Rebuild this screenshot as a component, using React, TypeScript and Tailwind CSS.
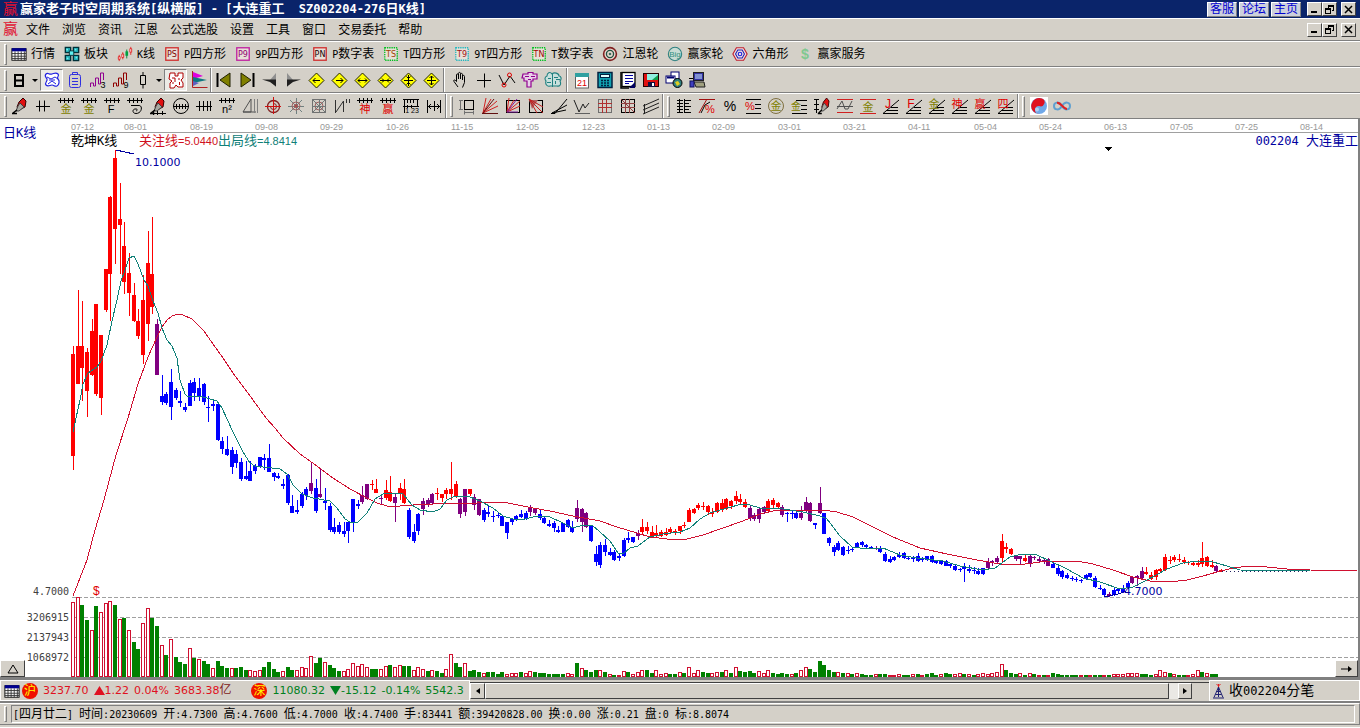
import type { ReactNode } from 'react'

const CJK = "font-['DejaVu_Sans_Mono','Noto_Sans_CJK_SC',sans-serif]"

const RAISED = 'bg-[#d4d0c8] border border-t-white border-l-white border-r-[#404040] border-b-[#404040]'

// split a label into latin and han runs, latin is drawn at the half-width size
function runs(text: string) {
  return text.match(/[\x00-\x7f]+|[^\x00-\x7f]+/g) ?? []
}

function Mixed({ text, latin = 'text-[10px]' }: { text: string; latin?: string }) {
  return (
    <span className="whitespace-pre">
      {runs(text).map((r, i) => (
        <span key={i} className={r.charCodeAt(0) < 128 ? latin : ''}>
          {r}
        </span>
      ))}
    </span>
  )
}

function Glyph({ c, x = 9, y = 16, size = 12, fill = '#e00000' }: { c: string; x?: number; y?: number; size?: number; fill?: string }) {
  return (
    <text x={x} y={y} fontSize={size} fill={fill} textAnchor="middle" className="font-['Liberation_Sans','Noto_Sans_CJK_SC',sans-serif]">
      {c}
    </text>
  )
}

function L({ d, c = '#000', w = 1, f = 'none' }: { d: string; c?: string; w?: number; f?: string }) {
  return <path d={d} stroke={c} strokeWidth={w} fill={f} />
}

function Icon({ children, size = 18 }: { children: ReactNode; size?: number }) {
  return (
    <svg width={size} height={size} viewBox="0 0 18 18" className="shrink-0" aria-hidden="true">
      {children}
    </svg>
  )
}

const RULER = 'M1 3.5h16M3.5 1v5M7.5 1v5M11.5 1v5M15.5 1v5'
const FAN = 'M1 16.5h15M1 16.5L17 3M5 13.5h11M9 10.5h7'

function Diamond({ d }: { d: string }) {
  return (
    <>
      <path d="M9.5 2L17 9.5L9.5 17L2 9.5z" fill="#ffff00" stroke="#202000" strokeWidth="1" />
      <L d={d} />
    </>
  )
}

function Frame({ t, c, tc }: { t: string; c: string; tc: string }) {
  return (
    <>
      <rect x="2" y="2" width="14" height="14" fill="#e8e0d8" stroke={c} strokeWidth="1.5" strokeDasharray={t[0] === 'T' ? '1.5 1' : undefined} />
      <text x="9" y="12.5" fontSize="9" fill={tc} textAnchor="middle" className="font-['DejaVu_Sans',sans-serif]">
        {t}
      </text>
    </>
  )
}

function TableIcon() {
  return (
    <>
      <rect x="1" y="3" width="16" height="13" fill="#fff" stroke="#000" />
      <rect x="1" y="2.5" width="16" height="3.5" fill="#000090" />
      <L d="M1 8.5h16M1 11.5h16M1 14h16M4.5 6v10M8 6v10M11.5 6v10M15 6v10" c="#303030" />
    </>
  )
}

const pen = (
  <>
    <path d="M8 5L12 1L15 4L14 10L8 13L6 10z" fill="#e01010" stroke="#300" strokeWidth="1" />
    <path d="M7 9L9 6L13 10L8 14L5 14z" fill="#a8a8a0" stroke="#404040" strokeWidth="1" />
    <L d="M2 16L6 13M1 16.5h5" w={1.5} />
  </>
)

const modules: [string, ReactNode][] = [
  ['行情', <TableIcon />],
  ['板块', <>
    <path d="M1.500 1.500h6v6h-6zM10.500 1.500h6v6h-6zM1.500 10.500h6v6h-6zM10.500 10.500h6v6h-6z" fill="#20a8b0" stroke="#003038" strokeWidth="1.500" />
    <path d="M6 5.500h5v5H6z" fill="#60f0f0" stroke="#003038" />
    <path d="M2.500 3h2v2h-2zM12 3h2v2h-2zM3 13h2v2H3zM13 12h2v2h-2z" fill="#70f0f0" />
  </>],
  ['K线', <>
    <L d="M2.500 10v7M6.500 7v8M15.500 1v9" c="#e02020" />
    <path d="M1.500 12h2v3h-2zM5.500 9h2v4h-2zM14.500 3h2v4h-2z" fill="#fff" stroke="#e02020" />
    <L d="M11 4v10" c="#008030" />
    <rect x="9.500" y="6" width="3" height="5" fill="#00a040" />
  </>],
  ['P四方形', <Frame t="PS" c="#d03030" tc="#800000" />],
  ['9P四方形', <Frame t="P9" c="#c020a0" tc="#900070" />],
  ['P数字表', <Frame t="PN" c="#d03030" tc="#200000" />],
  ['T四方形', <Frame t="TS" c="#00c020" tc="#a04000" />],
  ['9T四方形', <Frame t="T9" c="#20b8c0" tc="#a01010" />],
  ['T数字表', <Frame t="TN" c="#00c020" tc="#a00000" />],
  ['江恩轮', <>
    <circle cx="9" cy="9" r="7.200" fill="#e8d8d0" stroke="#802020" strokeWidth="1.800" />
    <circle cx="9" cy="9" r="4" fill="none" stroke="#205040" strokeWidth="1.500" />
    <circle cx="9" cy="9" r="1.500" fill="#407060" />
  </>],
  ['赢家轮', <>
    <circle cx="9" cy="9" r="7.500" fill="#c8dcd4" stroke="#308080" strokeWidth="1.200" />
    <Glyph c="Big" y={12} size={9} fill="#309080" />
  </>],
  ['六角形', <>
    <path d="M5 2h8l4 7l-4 7H5L1 9z" fill="#f0e0e0" stroke="#c02030" strokeWidth="1.300" />
    <path d="M6.500 4.500h5l2.500 4.500l-2.500 4.500h-5L4 9z" fill="none" stroke="#2020b0" strokeWidth="1.200" />
    <circle cx="9" cy="9" r="2" fill="none" stroke="#2020e0" strokeWidth="1.300" />
  </>],
  ['赢家服务', <text x="9" y="15" fontSize="16" fontWeight="700" fill="#80c890" textAnchor="middle" className="font-['Liberation_Sans',sans-serif]">$</text>],
]

type Tool = { name: string; icon: ReactNode; on?: boolean; menu?: boolean }

const viewTools: Tool[] = [
  { name: '周期', icon: <L d="M5 4h8v11H5zM5 9.500h8" w={2} />, menu: true },
  { name: '云图', on: true, icon: <>
    <path d="M3 3c2-2 3 1 6 0s4-2 6 0s-2 3 0 5s1 6-1 7s-3-1-5-1s-4 2-6 0s2-4 1-6s-3-3-1-5z" fill="#fff" stroke="#2020e0" strokeWidth="1.200" />
    <L d="M4 6l4 2l4-2l3 2M5 13l4-3l4 3M6 9h6" c="#2020e0" />
  </> },
  { name: '便签', icon: <>
    <rect x="3.500" y="3.500" width="11" height="13" rx="2" fill="none" stroke="#3030e0" />
    <L d="M6.500 4v-2.500h5v2.500M6 7.500h6M6 10.500h6M6 13.500h6" c="#3030e0" />
  </> },
  { name: '波段3', icon: <>
    <L d="M1.500 16v-4h3v3h2v-8h3v6h2v-11h3v7" c="#900090" />
    <Glyph c="3" x={14} y={17} size={9} fill="#000" />
  </> },
  { name: '波段9', icon: <>
    <L d="M1.500 16v-4h3v3h2v-8h3v6h2v-11h3v7" c="#900000" />
    <Glyph c="9" x={14} y={17} size={9} fill="#000" />
  </> },
  { name: 'K线样式', icon: <L d="M6.500 4.500h5v9h-5zM9 1v3.500M9 13.500v4" />, menu: true },
  { name: '形态', on: true, icon: <>
    <path d="M3 2h5v3h3V2h5v5l-2 2l2 3v4h-5l-2-2l-2 3H3v-5l2-2l-3-2z" fill="#fff" stroke="#b00000" />
    <L d="M5 7h3v4M11 8h2M12.500 11v3M5 12h2" c="#b00000" />
  </> },
  { name: '分布', icon: <>
    <path d="M3 1L13 5L3 8z" fill="#e000e0" />
    <path d="M3 6L17 9L3 12z" fill="#107880" />
    <path d="M3 10L9 12L3 15z" fill="#6060c0" />
    <L d="M2.500 0v16.500h15" c="#b02020" />
  </> },
]

const moveTools: Tool[] = [
  { name: '最前', icon: <><path d="M15 2v14L5 9z" fill="#808000" stroke="#202000" /><L d="M2.500 2v14" w={2} /></> },
  { name: '最后', icon: <><path d="M3 2v14L13 9z" fill="#808000" stroke="#202000" /><L d="M15.500 2v14" w={2} /></> },
  { name: '左移', icon: <><path d="M15 2v14L9 9z" fill="#909090" /><path d="M1 8.500h14v7L9 11z" fill="#202020" /></> },
  { name: '右移', icon: <><path d="M3 2v14L9 9z" fill="#909090" /><path d="M17 8.500H3v7L9 11z" fill="#202020" /></> },
  { name: '向左', icon: <Diamond d="M6 9.500h7M8.500 7L6 9.500L8.500 12" /> },
  { name: '向右', icon: <Diamond d="M6 9.500h7M10.500 7L13 9.500L10.500 12" /> },
  { name: '横向放大', icon: <Diamond d="M5 9.500h9M7 7.500L5 9.500l2 2M12 7.500l2 2l-2 2" /> },
  { name: '横向缩小', icon: <Diamond d="M4 9.500h11M6 7.500l2 2l-2 2M13 7.500l-2 2l2 2" /> },
  { name: '纵向缩小', icon: <Diamond d="M9.500 4v11M5 9.500h9M7.500 5.500l2 2l2-2M7.500 13.500l2-2l2 2" /> },
  { name: '纵向放大', icon: <Diamond d="M9.500 5v9M5 9.500h9M7.500 7l2-2l2 2M7.500 12l2 2l2-2" /> },
]

const pickTools: Tool[] = [
  { name: '拖动', icon: <L d="M6 16L2 10.500c-1-2 1-2 2.500 0V4c0-1.500 2-1.500 2 0v4V2.500c0-1.500 2-1.500 2 0V8V3.500c0-1.500 2-1.500 2 0V9V5.500c0-1.500 2-1.500 2 0v6l-2 5" /> },
  { name: '十字', icon: <L d="M2 9.500h14M9.500 2.500v14" /> },
  { name: '连线', icon: <><L d="M1 4l5 10l6-9l5 7" /><circle cx="6" cy="14" r="2" fill="none" stroke="#e00000" /><circle cx="11.500" cy="4" r="2" fill="none" stroke="#e00000" /></> },
  { name: '江恩树', icon: <><path d="M2 3h5V1.500h5V3h4v5h-4v2h-2v6H6v-6H3V7H1z" fill="#e8d0e8" stroke="#900090" strokeWidth="1.200" /><L d="M4 5.500h4M10 5.500h4M7 8.500h3" c="#900090" /></> },
  { name: '脑图', icon: <><path d="M8 3c-2-3-5-1-5 2c-3 1-2 4-1 5c-1 3 1 6 4 5h7c4 1 4-3 3-5c2-2 1-5-1-5c0-3-5-4-7-2z" fill="#c8e0dc" stroke="#208080" strokeWidth="1.100" /><L d="M8.500 3v13M4 7.500h3M10 6.500h4M3 11.500h4M11.500 10v3M12 8.500h4" c="#208080" /></> },
]

const sysTools: Tool[] = [
  { name: '日历', icon: <><rect x="2.500" y="4" width="13" height="13" fill="#fff" stroke="#606060" /><rect x="2" y="2" width="14" height="4" fill="#30a0a0" /><Glyph c="21" y={15} size={9} /></> },
  { name: '计算器', icon: <><rect x="2" y="1.500" width="14" height="15" fill="#10a0b0" stroke="#002040" strokeWidth="1.500" /><rect x="4.500" y="3.500" width="9" height="3" fill="#e0ffff" stroke="#002040" /><path d="M5 9.500h8M5 12h8M5 14.500h8" stroke="#002040" strokeWidth="1.500" strokeDasharray="2 1" /></> },
  { name: '记事', icon: <><rect x="3" y="1.500" width="13" height="14" fill="#fff" stroke="#000" strokeWidth="1.300" /><L d="M6 4.500h8M6 7.500h8M6 10.500h8M6 12.500h4" c="#0000a0" /><L d="M2 1v16h8" w={1.500} /><path d="M10 17l6-6v6z" fill="#000060" /></> },
  { name: '保存', icon: <><rect x="1.500" y="2.500" width="15" height="13" fill="#e01010" stroke="#200" /><path d="M5 3h11v6H5z" fill="#90f0e0" /><path d="M10 9l6-5v5z" fill="#10a050" /><rect x="6" y="11" width="7" height="5" fill="#101040" /><rect x="10" y="12" width="2" height="3" fill="#fff" /></> },
  { name: '网络', icon: <><rect x="6" y="1" width="8" height="7" fill="#fff" stroke="#000070" /><rect x="1" y="5" width="9" height="7" fill="#fff" stroke="#000070" /><L d="M2 6.500h7" c="#000070" w={2} /><circle cx="12.500" cy="12" r="4.500" fill="#308080" stroke="#000" /><path d="M10 11l3-1l2 3l-3 2z" fill="#e0d020" /></> },
  { name: '终端', icon: <><rect x="5.500" y="1.500" width="10" height="8" fill="#3030a0" stroke="#202020" /><rect x="7" y="3" width="7" height="5" fill="#8090d0" /><path d="M6 11h10l1 5H8z" fill="#a0a080" stroke="#202020" /><rect x="2" y="10" width="4" height="6" fill="#4040c0" stroke="#101060" /><L d="M1 7.500h4" /></> },
]

const drawTools: Tool[] = [
  { name: '画笔', icon: pen },
  { name: '等分线', icon: <L d="M2 9.500h14M5.500 3.500v11M10.500 3.500v11" /> },
  { name: '黄金时段', icon: <><L d={RULER} /><Glyph c="金" size={11} fill="#808000" /></> },
  { name: '黄金周期', icon: <><L d={RULER} /><Glyph c="金" size={11} fill="#808000" /></> },
  { name: '斐波那契', icon: <><L d={RULER} /><Glyph c="F" x={8} size={11} fill="#000" /></> },
  { name: '螺旋', icon: <><L d={RULER} /><L d="M5 8.500h8c4 0 3 8-3 8c-4 0-4-5 0-4.500c2 0 1 2 0 2" /></> },
  { name: '笔尺', icon: <>{pen}<L d="M2 16.500h15M4.500 14v4M8.500 14v4M13.500 14v4" /></> },
  { name: '圆尺', icon: <><circle cx="9" cy="9" r="7.500" fill="none" stroke="#000" /><L d="M1 9.500h16M4.500 7v5M7.500 7v5M10.500 7v5M13.500 7v5" /></> },
  { name: '密等分', icon: <L d="M1 9.500h16M4.500 4v10M8.500 4v10M12.500 4v10M15.500 4v10" /> },
  { name: '平方', icon: <><L d={RULER} /><Glyph c="n²" size={11} fill="#000" /></> },
  { name: '角度', icon: <><L d="M2 15L10 2v13zM2 15h13" c="#505050" /><L d="M13.500 2v14M16.500 2v14" c="#808080" /></> },
  { name: '时间圆', icon: <><circle cx="9.500" cy="9.500" r="6" fill="none" stroke="#802020" strokeWidth="1.300" /><path d="M9.500 6.500a3 3 0 1 1-3 3" fill="none" stroke="#802020" /><L d="M9.500 0v17M1 9.500h16" c="#d01010" /></> },
  { name: '星形', icon: <><L d="M9.500 1v16M1 9.500h16M3 3l12 12M15 3L3 15" c="#708080" /><circle cx="9" cy="9" r="4" fill="none" stroke="#a06060" /><circle cx="9" cy="9" r="2" fill="#a05050" /></> },
  { name: '蛛网', icon: <><rect x="2.500" y="2.500" width="13" height="13" fill="none" stroke="#707070" /><circle cx="9" cy="9" r="4" fill="none" stroke="#a06060" /><L d="M2 2l14 14M16 2L2 16M9.500 2v14M2 9.500h14" c="#707878" /></> },
  { name: '锯齿', icon: <L d="M2.500 16V3M3 15L10.500 4v11M13.500 2v4M16.500 2v4" c="#303030" /> },
  { name: '神尺', icon: <><L d={RULER} /><Glyph c="神" size={11} /></> },
  { name: '赢尺', icon: <><L d={RULER} /><Glyph c="赢" size={11} /></> },
  { name: '数列', icon: <><L d="M1 2.500h16M1 9.500h16M2.500 2v14M5.500 2v4M8.500 2v4M11.500 2v4M15.500 2v8M5.500 8v3M9.500 8v3" /><Glyph c="1 23" x={10} size={7} fill="#000" /></> },
  { name: '跨度', icon: <L d="M2.500 3v13M15.500 3v13M9.500 4v10M3 9.500h12M6 7L3.500 9.500L6 12M12 7l2.500 2.500L12 12" /> },
]

const shapeTools: Tool[] = [
  { name: '矩形', icon: <><rect x="6.500" y="3.500" width="9" height="9" fill="none" stroke="#000" /><L d="M2.500 3v10M1 3.500h4M1 12.500h4M6 15.500h10M6.500 13.500v4M15.500 13.500v4" c="#707070" /></> },
  { name: '射线', icon: <><L d="M2 16L5 1M2 16L10 2M2 16L16 4M2 16L17 9" c="#d02020" /><L d="M2 16L13 2M1 16.500h16" c="#601010" /></> },
  { name: '方射', icon: <><rect x="2.500" y="3.500" width="13" height="12" fill="none" stroke="#000" /><L d="M3 15L5 1M3 15L10 3M3 15L16 4M3 15L16 9" c="#d02020" /><L d="M3 15L13 2M3 15h11" c="#8020a0" /></> },
  { name: '阻力线', icon: <><rect x="2.500" y="3.500" width="13" height="12" fill="none" stroke="#000" /><path d="M2 3h9L5 12z" fill="#b06060" /><L d="M2 2L16 16M2 2l8 14M2 2l14 8" c="#c02020" /></> },
  { name: '角射', icon: <L d="M1 16.500h4L17 2M2 16L17 8M2 16L16 13" /> },
  { name: '波形', icon: <><L d="M1 3l5 12l4-8l2 4L16 6" c="#202020" /><L d="M2 16.500h15" c="#606060" /></> },
  { name: '方格', icon: <><rect x="2.500" y="2.500" width="13" height="13" fill="none" stroke="#707070" /><L d="M2 6.500h14M2 10.500h14M6.500 2v14M10.500 2v14" c="#b03030" /></> },
  { name: '九宫', icon: <><rect x="2.500" y="2.500" width="13" height="13" fill="none" stroke="#000" /><L d="M2 6.500h14M2 10.500h14M6.500 2v14M10.500 2v14M2 2l14 14" c="#904040" /></> },
  { name: '平行线', icon: <L d="M1 9L17 2M1 13L17 6M1 17L17 10M2.500 7v10" c="#202020" /> },
]

const levelTools: Tool[] = [
  { name: '刻度', icon: <path d="M4.500 2v14M9.500 2v14M2 3.500h6M2 6.500h6M2 9.500h6M2 12.500h6M2 15.500h6M9 3.500h7M9 6.500h5M9 9.500h7M9 12.500h5M9 15.500h7" fill="none" stroke="#000" /> },
  { name: '百分射', icon: <><L d="M1 2.500h16M1 16L9 2" c="#a01010" /><L d="M3 16l4-8l5-3" /><Glyph c="%" x={12} size={11} /></> },
  { name: '百分', icon: <Glyph c="%" y={14} size={14} fill="#000" /> },
  { name: '百分线', icon: <><L d="M2 2.500h15M11 7.500h6M11 11.500h6M2 16.500h15" /><Glyph c="%" x={6} y={13} size={11} /></> },
  { name: '金圆', icon: <><circle cx="9" cy="9" r="7.500" fill="none" stroke="#807040" /><Glyph c="金" y={13} size={11} fill="#808000" /></> },
  { name: '金线', icon: <><L d="M6 3.500h11M11 8.500h6M11 12.500h6M2 16.500h15" /><Glyph c="金" x={6} y={13} size={10} fill="#808000" /></> },
  { name: '笔线', icon: <><g transform="translate(4 0) scale(0.800 1)">{pen}</g><L d="M3.500 2v14M1 2.500h5M1 7.500h5M1 12.500h5" /></> },
  { name: '甘氏', icon: <><L d="M1 2.500h16M1 15.500h16" c="#d02020" /><L d="M1 12L6 4l3 8l3 0l4-8M1 9.500h16" c="#505050" /></> },
  { name: '金平', icon: <><L d="M1 2.500h16M1 16.500h16" c="#d02020" /><Glyph c="金" y={14} size={11} fill="#808000" /></> },
  ...['J', 'F', '金', '神', '赢', '四'].map((c) => ({
    name: `${c}角线`,
    icon: <><L d={FAN} /><Glyph c={c} x={6} y={11} size={c > 'z' ? 11 : 12} fill={c === '金' ? '#808000' : '#e00000'} /></>,
  })),
]

const extraTools: Tool[] = [
  { name: '太极', icon: <><rect width="18" height="18" fill="#fff" /><circle cx="9" cy="9" r="8" fill="#70a8e8" /><path d="M12 1.500a8 8 0 1 0-3 15.500a4 4 0 0 1 0-8a4 4 0 0 0 3-7.500z" fill="#e01020" /><circle cx="11" cy="5.500" r="1.800" fill="#e01020" /><circle cx="7" cy="12.500" r="2" fill="#b0d0f0" /></> },
  { name: '循环', icon: <><path d="M9 9C6 4 1 5 1 9s5 5 8 0" fill="none" stroke="#60a0d0" strokeWidth="2" /><path d="M9 9c3 5 8 4 8 0s-5-5-8 0" fill="none" stroke="#60a0d0" strokeWidth="2" /><path d="M4 6c4-1 6 6 10 6" fill="none" stroke="#e02020" strokeWidth="2.200" /></> },
]

function Tools({ items }: { items: Tool[] }) {
  return (
    <div className="flex items-center">
      {items.map((t) => (
        <button
          key={t.name}
          type="button"
          title={t.name}
          aria-pressed={t.on}
          className={
            'flex h-[22px] items-center justify-center ' +
            (t.menu ? 'w-8 gap-1 ' : 'w-[23px] ') +
            (t.on ? 'border border-t-[#808080] border-l-[#808080] border-r-white border-b-white bg-[#ecebe6]' : '')
          }
        >
          <Icon>{t.icon}</Icon>
          {t.menu && <span className="border-x-[3px] border-t-[3px] border-x-transparent border-t-black" />}
        </button>
      ))}
    </div>
  )
}

function Grip({ className = 'mx-1 h-[21px]' }: { className?: string }) {
  return (
    <div
      className={
        'w-[3px] shrink-0 self-center border border-t-white border-l-white border-r-[#808080] border-b-[#808080] ' + className
      }
    />
  )
}

function Sep({ className = '' }: { className?: string }) {
  return <div className={'w-[2px] shrink-0 self-stretch border-l border-l-[#808080] border-r border-r-white ' + className} />
}

function BandSplit() {
  return (
    <>
      <Sep />
      <Grip className="mr-[2px] ml-[3px] h-[21px]" />
    </>
  )
}

function WindowButtons() {
  const b = 'flex h-[14px] w-[15px] items-center justify-center ' + RAISED
  return (
    <div className="flex">
      <button type="button" aria-label="最小化" className={b}>
        <svg width="9" height="9"><path d="M1 7h6" stroke="#000" strokeWidth="2" /></svg>
      </button>
      <button type="button" aria-label="还原" className={b}>
        <svg width="9" height="9" fill="none" stroke="#000" shapeRendering="crispEdges">
          <path d="M3.500 2.500v-2h5v5h-2M3 1.500h5M.5 3.500h5v5h-5zM1 4.500h5" />
        </svg>
      </button>
      <button type="button" aria-label="关闭" className={'ml-1 ' + b}>
        <svg width="9" height="9"><path d="M1 1l7 7M8 1l-7 7" stroke="#000" strokeWidth="1.500" /></svg>
      </button>
    </div>
  )
}

// colour, high, body top, body bottom, low - one entry per trading day
const CANDLES = `r346,354,456,470 r290,346,384,384 r301,346,368,401 r348,352,391,417 r319,331,375,376 r304,304,394,396 r335,335,398,415
r269,269,310,312 r196,197,274,321 r150,158,229,264 r183,219,225,274 r222,246,282,294 r253,273,293,316 r283,295,321,322 r309,321,336,339
r275,300,355,364 r231,263,324,341 r217,274,307,314 p319,324,375,375 b375,396,402,405 b392,394,403,405 b369,382,407,420 b388,390,398,400
b391,401,403,407 b403,407,410,412 b380,383,406,406 b378,382,393,401 b378,388,397,401 b383,384,402,405 b396,407,408,422 b399,404,406,411
b404,404,440,441 b437,441,449,454 b436,449,455,456 b447,450,467,474 b450,454,463,468 b458,462,479,481 b461,476,479,480 b461,471,481,481
b464,466,471,474 b457,457,467,468 b454,458,460,470 b444,458,472,472 b472,473,477,481 b473,476,478,479 b479,484,486,489 b474,475,503,505
b495,506,513,513 b500,510,512,514 b492,494,506,508 b487,489,495,500 p463,483,491,494 b479,488,511,513 p468,494,497,498 b488,501,503,510
b503,506,530,532 b518,527,532,534 b522,525,532,534 b522,531,534,537 b521,522,531,543 b499,499,522,532 b500,504,506,509 p486,495,502,504
p484,484,499,500 r480,484,485,490 r479,489,493,493 p496,498,499,505 r480,490,498,500 r476,492,501,502 p493,497,503,522 r483,488,494,500
r479,489,503,504 b508,510,537,539 b524,532,541,543 b513,514,531,535 p498,501,509,515 p498,500,505,507 p493,494,503,504 r488,493,494,500
r494,494,498,502 r488,490,494,499 r462,489,494,500 r481,484,497,498 p498,499,514,518 p489,489,512,516 r489,489,494,496 p494,497,505,510
p499,499,515,516 b508,510,520,522 b506,512,514,517 b511,516,517,522 b513,515,516,518 b515,516,526,526 b522,522,533,539 b518,519,522,525
b515,516,519,521 b510,514,517,518 b511,513,519,520 p505,508,512,516 p508,508,513,515 b510,514,518,520 b517,518,523,524 b520,524,526,527
b521,523,528,532 b526,530,532,533 b523,523,532,532 b519,520,527,528 b521,527,532,533 p500,508,519,522 p508,509,522,532 p512,513,527,528
b525,526,541,542 b546,554,562,566 b542,545,565,568 b539,545,552,556 b548,552,555,556 b550,552,560,561 b554,556,558,561 b538,540,556,557
b532,538,540,543 b537,537,542,543 p530,533,536,540 r519,527,532,535 r522,527,531,534 r526,532,536,537 r525,533,536,537 r530,532,536,537
r528,532,535,536 r527,529,532,534 r529,531,532,535 r526,526,531,534 r522,525,526,528 r508,510,522,522 r508,509,513,514 r503,505,508,510
r502,506,507,510 r505,506,512,515 r508,512,514,517 r502,503,512,513 r499,503,509,512 r498,499,509,510 r500,501,506,509 r491,496,501,504
r494,499,502,504 r499,502,507,508 p505,508,518,521 p513,515,519,521 p507,509,519,523 p506,507,512,514 r499,501,511,512 r498,500,505,508
r502,503,507,508 p505,507,515,517 b512,513,514,522 b511,513,514,519 b510,513,518,519 p506,513,518,520 p497,502,510,512 p502,503,521,522
b523,523,525,529 p487,503,513,514 b513,513,534,534 b537,538,543,546 b545,547,552,556 b541,543,550,551 b546,547,555,556 b546,550,551,554
b547,549,550,552 b542,543,547,548 b541,542,545,547 b544,545,547,548 b546,547,548,549 p546,548,549,550 b546,548,552,553 b552,554,561,562
b556,559,562,563 b556,557,560,561 b552,555,557,558 b552,553,558,559 b557,558,559,560 b556,558,559,562 b553,556,561,562 b557,558,560,562
b556,556,560,561 b555,556,562,563 b560,561,563,564 b560,561,564,565 b560,561,566,566 b564,564,566,568 b565,566,570,571 b568,569,570,572
b563,567,569,582 b565,569,571,573 b567,570,571,574 b568,571,574,575 b568,568,574,575 p558,562,568,569 p560,561,563,566 p556,558,562,564
r534,541,558,563 r543,547,549,553 r548,549,554,555 p555,555,559,561 p556,556,559,565 r554,558,561,562 p555,556,563,567 p556,557,558,560
p557,559,561,563 p558,560,562,564 p558,559,566,566 b563,564,568,568 b566,568,574,576 b570,571,577,579 b573,575,578,579 b576,578,579,581
b577,579,580,582 b579,580,581,583 b574,575,579,580 b573,573,577,578 b576,578,587,588 b585,588,589,590 b588,589,595,597 p592,594,596,597
b588,590,595,596 b588,589,591,593 b585,588,592,593 b581,583,587,589 p576,577,583,584 p575,576,578,586 p567,571,578,579 r567,572,574,575
r572,575,579,580 r569,570,577,580 r568,569,571,573 r554,557,570,571 r556,560,561,564 r555,557,560,562 r554,559,560,562 r557,560,562,564
r561,562,563,565 r562,563,565,566 r560,563,565,567 r542,558,564,567 r556,557,566,567 r560,565,567,568 p565,566,571,572 r569,570,571,572`
  .split(/\s+/)
  .map((s) => ({ kind: s[0], v: s.slice(1).split(',').map(Number) }))

// u = rising (hollow), d = falling (solid), value is the top of the bar
const VOLUMES = `u602 u597 d605 d620 u630 d606 u612 u603 u601 d605 u619 d618 u630 d642 d649 u623 u608 d618 d626 u645 d655 u639 d657 d662
d664 u648 d658 u659 d661 d664 u668 d661 d666 d668 u668 d668 d667 d670 u670 u671 u670 d667 d662 d669 d672 u671 d667 d670 u670 u667 u668 u656
d663 d658 u662 d665 d668 d671 u671 u669 u663 u666 u664 u667 d669 d669 u669 u666 d665 u667 u665 d666 d666 u670 u667 u669 d671 u670 d671 d673
u669 u654 d663 d667 u663 d671 d670 d672 u673 d672 d672 d674 d672 u674 u673 u673 d672 u673 u671 d672 d673 d673 d674 d674 d674 d674 u673 u674
d663 u668 d670 d672 d670 u670 d672 u674 d675 u675 u671 d672 u674 u672 u670 d670 d673 u670 u674 u673 d674 d674 u672 d673 u667 u673 u670 d672
d673 u673 u672 d672 u670 d673 u667 d671 d672 d671 d673 u671 u673 u670 d673 d674 d673 d674 u674 d673 u670 u667 d669 d672 d661 d665 d670 d672
u672 d673 u673 d674 u673 d674 d675 d675 u674 d674 d674 u675 u675 u674 d675 d675 u674 d674 u675 d674 d673 d675 u674 d673 d674 u674 u673 d674
u674 d675 u674 u673 u674 u673 u672 u664 d670 d673 d674 u673 d675 u673 d674 u675 d675 u675 d673 d674 d675 d675 d675 d675 u675 d675 u675 d675
d675 u675 d675 u674 u674 u674 u673 u673 u673 d674 d674 d675 u674 u670 u672 d673 u674 d675 d675 u675 u674 u670 d672 u673 d674 d674`
  .split(/\s+/)
  .map((s) => ({ up: s[0] === 'u', top: Number(s.slice(1)) }))

const SLOW =
  '73,596 87,560 95,530 104,500 116,455 128,418 138,384 148,357 157,337 162,327 167,320 172,316 178,314 183,315 192,319 204,331 213,344 223,358 233,373 253,400 266,418 275,428 283,438 300,454 317,466 333,478 350,489 367,498 377,503 387,506 400,506 413,505 433,504 450,503 477,503 503,502 533,508 550,511 573,516 600,521 617,527 637,533 650,537 667,539 683,540 703,535 723,528 743,521 760,514 777,510 793,510 823,510 837,512 853,517 873,527 893,537 920,548 947,554 977,560 1000,564 1017,565 1033,563 1047,561 1077,561 1093,564 1113,570 1133,577 1150,581 1170,582 1187,580 1203,576 1217,572 1233,568 1250,566 1267,567 1287,569 1310,570 1357,571'
const FAST =
  '73,432 76,418 80,400 83,384 88,373 97,367 101,361 107,345 112,321 117,300 121,281 125,270 129,258 134,256 138,264 144,280 148,286 153,301 158,313 162,328 167,340 172,346 177,358 180,380 185,394 188,397 200,396 210,399 217,401 222,408 233,432 243,452 250,463 255,466 263,467 280,469 287,474 293,485 302,494 313,498 330,501 337,508 345,519 350,522 358,522 367,513 375,499 383,494 393,493 403,494 412,505 420,510 433,512 440,509 447,500 455,496 470,497 480,501 493,508 503,516 513,519 525,519 537,516 550,517 563,523 573,528 583,525 592,525 600,532 610,541 618,553 623,554 630,548 638,546 650,537 663,534 680,532 690,528 700,519 710,513 727,508 742,504 750,505 760,508 783,509 803,512 820,516 827,519 840,536 852,547 860,548 883,548 900,555 917,558 943,561 960,566 983,570 995,568 1010,557 1022,554 1037,555 1050,561 1067,569 1083,578 1100,582 1120,589 1133,587 1147,580 1167,569 1183,563 1197,561 1213,562 1227,566 1240,570 1310,571 1357,571'

const DATES: [number, string][] = [
  [71, '07-12'], [124, '08-01'], [190, '08-19'], [255, '09-08'], [320, '09-29'], [386, '10-26'], [451, '11-15'],
  [516, '12-05'], [582, '12-23'], [647, '01-13'], [712, '02-09'], [778, '03-01'], [843, '03-21'], [908, '04-11'],
  [974, '05-04'], [1039, '05-24'], [1104, '06-13'], [1170, '07-05'], [1235, '07-25'], [1300, '08-14'],
]

const COLORS: Record<string, string> = { r: '#ff0000', p: '#800080', b: '#0000ff' }

const barX = (i: number) => 73 + Math.round((i * 14) / 3)

function Label({ x, y, text, fill }: { x: number; y: number; text: string; fill: string }) {
  return (
    <text x={x} y={y} fill={fill} fontSize="13" className={CJK}>
      {runs(text).map((r, i) => (
        <tspan key={i} fontSize={r.charCodeAt(0) < 128 ? 12 : 13}>{r}</tspan>
      ))}
    </text>
  )
}

function Chart() {
  return (
    <div className="relative h-[558px] border-r-2 border-r-[#808080] bg-white">
      <svg className="block h-full w-full" role="img" aria-label="大连重工 日K线">
        {/* the drawing is in window coordinates, the chart starts below the toolbars */}
        <g transform="translate(0 -119)">
          <g shapeRendering="crispEdges">
            <line x1="71" x2="100%" y1="132.500" y2="132.500" stroke="#a0a0a0" />
            {[597, 617, 637, 657].map((y) => (
              <line key={y} x1="72" x2="100%" y1={y + 0.5} y2={y + 0.5} stroke="#a0a0a0" strokeDasharray="4 2" />
            ))}
            {VOLUMES.slice(0, 246).map((v, i) =>
              v.up ? (
                <rect key={i} x={barX(i) - 1.5} y={v.top + 0.5} width={3} height={676 - v.top} fill="#fff" stroke="#d01030" />
              ) : (
                <rect key={i} x={barX(i) - 2} y={v.top} width={4} height={677 - v.top} fill="#008000" />
              ),
            )}
            {CANDLES.map(({ kind, v }, i) => (
              <g key={i} fill={COLORS[kind]}>
                <rect x={barX(i)} y={v[0]} width={1} height={v[3] - v[0]} />
                <rect x={barX(i) - 2} y={v[1]} width={4} height={Math.max(1, v[2] - v[1])} />
              </g>
            ))}
            <polyline points={SLOW} fill="none" stroke="#d01030" />
            <polyline points={FAST} fill="none" stroke="#108078" />
            <path d="M116 150l18 4M1104 597l14-3l8-3" fill="none" stroke="#0000a0" />
            <path d="M1222 571.500h88" stroke="#202060" strokeDasharray="1 3" />
            <path d="M1104 147h8l-4 4z" fill="#000" />
          </g>
          <g fontSize="9" fill="#989898" className="font-['Liberation_Sans',sans-serif]">
            {DATES.map(([x, d]) => (
              <text key={d} x={x} y="130">{d}</text>
            ))}
          </g>
          <Label x={3} y={137} text="日K线" fill="#0000a0" />
          <Label x={71} y={145} text="乾坤K线" fill="#000" />
          <g fontSize="11" className="font-['Liberation_Sans','Noto_Sans_CJK_SC',sans-serif]">
            <text x="139" y="145" fill="#d01020"><tspan fontSize="13">关注线</tspan>=5.0440</text>
            <text x="218" y="145" fill="#108078"><tspan fontSize="13">出局线</tspan>=4.8414</text>
            <text x="93" y="595" fontSize="12" fill="#e00000">$</text>
          </g>
          <g fontSize="11" fill="#0000a0" className="font-['DejaVu_Sans',sans-serif]">
            <text x="135" y="166">10.1000</text>
            <text x="1124" y="595">4.7000</text>
          </g>
          <g fontSize="10" fill="#404040" textAnchor="end" className="font-['DejaVu_Sans_Mono',monospace]">
            <text x="69" y="595">4.7000</text>
            <text x="69" y="621">3206915</text>
            <text x="69" y="641">2137943</text>
            <text x="69" y="661">1068972</text>
          </g>
        </g>
      </svg>
      <div className={'absolute top-[14px] right-0 text-[13px] leading-4 whitespace-pre text-[#0000a0] ' + CJK}>
        <Mixed text="002204 大连重工" latin="text-[12px]" />
      </div>
      <button type="button" aria-label="展开指标" className={'absolute bottom-0 left-0 flex h-[17px] w-[25px] items-center justify-center ' + RAISED}>
        <svg width="12" height="10"><path d="M1 9L6 1L11 9z" fill="none" stroke="#000" /></svg>
      </button>
      <button type="button" aria-label="向右" className={'absolute right-0 bottom-0 flex h-[17px] w-[23px] items-center justify-center ' + RAISED}>
        <svg width="12" height="8"><path d="M0 4h9" stroke="#000" /><path d="M7 1l4 3l-4 3z" /></svg>
      </button>
    </div>
  )
}

type IndexQuote = { badge: string; last: string; up: boolean; rest: string[]; unit?: string }

const INDEXES: IndexQuote[] = [
  { badge: '沪', last: '3237.70', up: true, rest: ['1.22', '0.04%', '3683.38'], unit: '亿' },
  { badge: '深', last: '11080.32', up: false, rest: ['-15.12', '-0.14%', '5542.3'] },
]

function IndexBar({ q }: { q: IndexQuote }) {
  const [change, ...others] = q.rest
  return (
    <div className={'flex items-center gap-[5px] ' + (q.up ? 'text-[#e01020]' : 'text-[#008020]')}>
      <span className="flex size-4 items-center justify-center rounded-full bg-[#f01000] text-[12px] leading-none text-[#ffff00]">
        {q.badge}
      </span>
      <span>{q.last}</span>
      <span className="flex items-center">
        <svg width="11" height="9" fill="currentColor" aria-hidden="true">
          <path d={q.up ? 'M0 9L5.500 0L11 9z' : 'M0 0L5.500 9L11 0z'} />
        </svg>
        {change}
      </span>
      {others.map((t) => (
        <span key={t}>
          {t}
          {q.unit && t === others[others.length - 1] && <span className="text-[12px] text-[#802020]">{q.unit}</span>}
        </span>
      ))}
    </div>
  )
}

const MENUS = ['文件', '浏览', '资讯', '江恩', '公式选股', '设置', '工具', '窗口', '交易委托', '帮助']

const QUOTE = '[四月廿二] 时间:20230609 开:4.7300 高:4.7600 低:4.7000 收:4.7400 手:83441 额:39420828.00 换:0.00 涨:0.21 盘:0 标:8.8074'

const BAR = 'flex h-[26px] items-center border-t border-t-white border-b border-b-[#808080]'

export default function App() {
  return (
    <div className={'flex min-h-screen flex-col overflow-hidden bg-[#d4d0c8] text-[12px] leading-4 text-black ' + CJK}>
      <header className="flex h-[18px] items-center bg-[#0a246a] pr-1 pl-[3px] text-white">
        <span className="w-[17px] text-[15px] leading-none text-[#e01030]">赢</span>
        <h1 className="flex-1 text-[13px] leading-4 font-bold"><Mixed text="赢家老子时空周期系统[纵横版] - [大连重工  SZ002204-276日K线]" latin="text-[12px]" /></h1>
        <nav className="mr-[6px] flex gap-[2px]">
          {['客服', '论坛', '主页'].map((t) => (
            <a key={t} href="#" className="h-[15px] w-[30px] border border-t-white border-l-white border-r-[#808080] border-b-[#808080] bg-[#ccd0dc] text-center leading-[13px] text-[#0000d0]">
              {t}
            </a>
          ))}
        </nav>
        <WindowButtons />
      </header>

      <div className="flex h-[23px] items-center border-t border-t-white border-b border-b-[#808080] pr-1 pl-[3px]">
        <span className="w-[17px] text-[15px] leading-none text-[#e01030]">赢</span>
        <nav className="flex flex-1">
          {MENUS.map((m) => (
            <button key={m} type="button" className="px-[6px]">{m}</button>
          ))}
        </nav>
        <WindowButtons />
      </div>

      <div className={BAR}>
        <Grip />
        <div className="flex gap-[9px]">
          {modules.map(([name, icon]) => (
            <button key={name} type="button" className="flex items-center gap-1">
              <Icon size={16}>{icon}</Icon>
              <Mixed text={name} />
            </button>
          ))}
        </div>
      </div>

      <div className={BAR}>
        <Grip className="mr-px ml-1 h-[21px]" />
        <Tools items={viewTools} />
        <Sep />
        <Tools items={moveTools} />
        <Sep className="mr-1 ml-[1px]" />
        <Tools items={pickTools} />
        <Sep className="mx-[2px]" />
        <Tools items={sysTools} />
      </div>

      <div className={BAR}>
        <Grip className="mr-px ml-1 h-[21px]" />
        <Tools items={drawTools} />
        <BandSplit />
        <Tools items={shapeTools} />
        <BandSplit />
        <Tools items={levelTools} />
        <BandSplit />
        <Tools items={extraTools} />
      </div>

      <Chart />

      <div className="flex h-[26px] items-stretch border-t-[3px] border-b-2 border-t-[#808080] border-b-[#808080]">
        <div className="flex w-[470px] shrink-0 items-center overflow-hidden border border-white pl-[3px] font-['DejaVu_Sans','Noto_Sans_CJK_SC',sans-serif] text-[11px] whitespace-nowrap">
          <Icon size={16}><TableIcon /></Icon>
          <div className="ml-[2px] flex gap-5">
            {INDEXES.map((q) => (
              <IndexBar key={q.badge} q={q} />
            ))}
          </div>
        </div>
        <div className="my-[2px] flex min-w-0 flex-1 border-t border-t-[#404040]">
          <button type="button" aria-label="向左滚动" className={'flex w-[15px] items-center justify-center ' + RAISED}>
            <svg width="4" height="6"><path d="M4 0v6L0 3z" /></svg>
          </button>
          <div className={'flex-1 ' + RAISED} />
          <div className="w-[9px] bg-[#eae8e4]" />
          <button type="button" aria-label="向右滚动" className={'flex w-[14px] items-center justify-center ' + RAISED}>
            <svg width="4" height="6"><path d="M0 0v6L4 3z" /></svg>
          </button>
          <div className="w-[17px]" />
        </div>
        <div className="flex w-[151px] shrink-0 items-center gap-1 border border-white pl-[2px] text-[14px]">
          <svg width="13" height="16" fill="none" stroke="#202070">
            <path d="M6.500 4L2 14.500M6.500 4L11 14.500M4.500 8.500h4M3.500 11.500h6M1 15h11M6.500 4v10" />
            <path d="M4.500 1l2 2l2-2M6.500 1v3" stroke="#e02020" />
          </svg>
          <Mixed text="收002204分笔" latin="text-[12px]" />
        </div>
      </div>

      <footer className="flex h-[22px] items-stretch border-t border-r border-b border-t-white border-r-[#808080] border-b-[#808080] py-px">
        <Grip className="mx-1 h-4" />
        <div className="mr-1 flex flex-1 items-center border border-t-[#808080] border-l-[#808080] border-r-white border-b-white pl-[1px]">
          <Mixed text={QUOTE} />
        </div>
      </footer>
      <div className="mt-[2px] border-t border-t-white" />
    </div>
  )
}
